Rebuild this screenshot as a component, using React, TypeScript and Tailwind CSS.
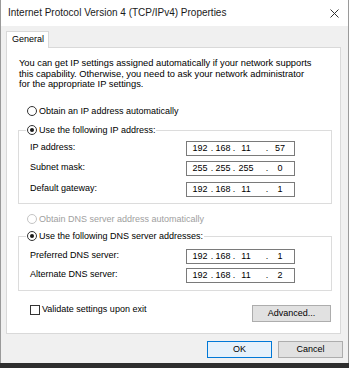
import React from "react";

const FONT = "font-['Liberation_Sans',Arial,sans-serif]";

function Radio({ checked, disabled }: { checked?: boolean; disabled?: boolean }) {
  return (
    <span
      className={
        "flex h-[10px] w-[10px] shrink-0 items-center justify-center rounded-full border bg-white " +
        (disabled ? "border-[#c4c4c4]" : "border-[#333333]")
      }
    >
      {checked && <span className="h-[4px] w-[4px] rounded-full bg-[#1a1a1a]" />}
    </span>
  );
}

function RadioRow({ label, checked, disabled }: { label: string; checked?: boolean; disabled?: boolean }) {
  return (
    <div className={"flex h-[11px] items-center gap-[2px] " + (disabled ? "text-[#a0a0a0]" : "text-black")}>
      <Radio checked={checked} disabled={disabled} />
      <span className="whitespace-nowrap leading-[11px]">{label}</span>
    </div>
  );
}

function IpBox({ parts }: { parts: string[] }) {
  return (
    <div className="flex h-[15px] w-[109px] items-center border border-[#7a7a7a] bg-white pl-[3px] leading-[13px]">
      <span className="w-[20px] text-center">{parts[0]}</span>
      <span className="w-[4px] text-center">.</span>
      <span className="w-[18px] text-center">{parts[1]}</span>
      <span className="w-[4px] text-center">.</span>
      <span className="w-[20px] text-center">{parts[2]}</span>
      <span className="w-[9px]" />
      <span className="w-[4px] text-center">.</span>
      <span className="w-[22px] text-center">{parts[3]}</span>
    </div>
  );
}

function FieldRow({ label, parts, className = "" }: { label: string; parts: string[]; className?: string }) {
  return (
    <div className={"flex items-center pl-[4px] " + className}>
      <span className="w-[156px] whitespace-nowrap">{label}</span>
      <IpBox parts={parts} />
    </div>
  );
}

function Button({ children, primary, className = "" }: { children: React.ReactNode; primary?: boolean; className?: string }) {
  return (
    <div
      className={
        "flex h-[17px] items-center justify-center border leading-[13px] " +
        (primary ? "border-[#0078d7] bg-[#e5f1fb]" : "border-[#adadad] bg-[#e1e1e1]") +
        " " +
        className
      }
    >
      {children}
    </div>
  );
}

export default function App() {
  return (
    <div className={"flex h-[368px] w-[349px] flex-col bg-[#2e2e2e] text-[9px] text-black " + FONT}>
      <div className="flex h-[363px] flex-col border-x border-[#9a9a9a] bg-[#f0f0f0]">
        {/* title bar */}
        <div className="flex h-[26px] shrink-0 items-center justify-between bg-white pl-[7px] pr-[9px]">
          <span className="whitespace-nowrap text-[10px] leading-[14px] text-[#1a1a1a]">
            Internet Protocol Version 4 (TCP/IPv4) Properties
          </span>
          <svg width="9" height="9" viewBox="0 0 9 9" className="text-[#333]">
            <path d="M0.5 0.5 L8.5 8.5 M8.5 0.5 L0.5 8.5" stroke="currentColor" strokeWidth="1" fill="none" />
          </svg>
        </div>

        {/* tabs */}
        <div className="flex flex-col pl-[5px] pr-[7px] pt-[5px]">
          <div className="relative z-10 -mb-px flex h-[17px] w-[43px] items-center border-x border-t border-[#d9d9d9] bg-white pl-[5px]">
            General
          </div>
          <div className="flex flex-col border border-[#d9d9d9] bg-white pt-[10px] pb-[11px]">
            <p className="pl-[12px] pr-[4px] text-[9.3px] leading-[10.5px]">
              You can get IP settings assigned automatically if your network supports
              <br />
              this capability. Otherwise, you need to ask your network administrator
              <br />
              for the appropriate IP settings.
            </p>

            <div className="mt-[16px] pl-[20px]">
              <RadioRow label="Obtain an IP address automatically" />
            </div>

            <fieldset className="ml-[11px] mt-[8px] w-[314px] border border-[#dcdcdc] pl-[7px] pt-[5px] pb-[6px]">
              <legend className="px-[1px]">
                <RadioRow label="Use the following IP address:" checked />
              </legend>
              <FieldRow label="IP address:" parts={["192", "168", "11", "57"]} />
              <FieldRow label="Subnet mask:" parts={["255", "255", "255", "0"]} className="mt-[5px]" />
              <FieldRow label="Default gateway:" parts={["192", "168", "11", "1"]} className="mt-[6px]" />
            </fieldset>

            <div className="mt-[10px] pl-[20px]">
              <RadioRow label="Obtain DNS server address automatically" disabled />
            </div>

            <fieldset className="ml-[11px] mt-[6px] w-[314px] border border-[#dcdcdc] pl-[7px] pt-[7px] pb-[7px]">
              <legend className="px-[1px]">
                <RadioRow label="Use the following DNS server addresses:" checked />
              </legend>
              <FieldRow label="Preferred DNS server:" parts={["192", "168", "11", "1"]} />
              <FieldRow label="Alternate DNS server:" parts={["192", "168", "11", "2"]} className="mt-[4px]" />
            </fieldset>

            <div className="mt-[14px] flex items-start justify-between pl-[23px] pr-[9px]">
              <div className="flex h-[10px] items-center gap-[2px]">
                <span className="h-[10px] w-[10px] border border-[#333333] bg-white" />
                <span className="leading-[11px]">Validate settings upon exit</span>
              </div>
              <Button className="w-[79px]">Advanced...</Button>
            </div>
          </div>
        </div>

        {/* footer buttons */}
        <div className="mt-[7px] flex justify-end gap-[6px] pr-[5px]">
          <Button primary className="w-[65px]">OK</Button>
          <Button className="w-[65px]">Cancel</Button>
        </div>
      </div>
    </div>
  );
}
